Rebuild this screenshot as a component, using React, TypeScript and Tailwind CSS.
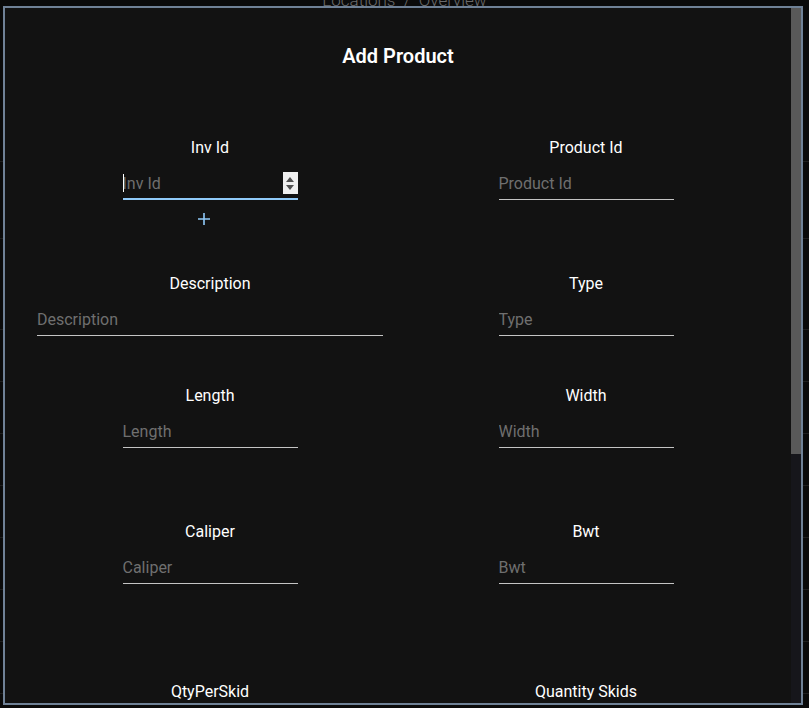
import React from 'react';

type FieldProps = {
  label: string;
  placeholder: string;
  wide?: boolean;
  focused?: boolean;
  withAdd?: boolean;
};

const Field: React.FC<FieldProps> = ({ label, placeholder, wide, focused, withAdd }) => {
  return (
    <div className="flex flex-col items-center">
      <label className="mt-px mb-[11px] text-[16px] leading-[24px] font-normal text-white">{label}</label>
      {focused ? (
        <div className="relative w-[175px] h-[29px] flex items-start border-b-2 border-[#90caf9]">
          <input
            type="text"
            placeholder={placeholder}
            className="flex-1 min-w-0 mt-px h-[24px] bg-transparent outline-none text-[16px] leading-[24px] text-white placeholder:text-[#6f6f6f]"
          />
          {/* caret */}
          <span className="absolute left-0 top-[3px] w-px h-[18px] bg-white" />
          {/* number spinner */}
          <div className="mt-px w-[15px] h-[22px] bg-[#efefef] flex flex-col items-center justify-center gap-[3px]">
            <svg width="8" height="5" viewBox="0 0 8 5">
              <path d="M0 5 L4 0 L8 5 Z" fill="#505050" />
            </svg>
            <svg width="8" height="5" viewBox="0 0 8 5">
              <path d="M0 0 L4 5 L8 0 Z" fill="#505050" />
            </svg>
          </div>
        </div>
      ) : (
        <input
          type="text"
          placeholder={placeholder}
          className={`${wide ? 'w-[346px]' : 'w-[175px]'} h-[29px] pb-[4px] bg-transparent outline-none border-b border-[#c4c4c4] text-[16px] leading-[24px] text-white placeholder:text-[#6f6f6f]`}
        />
      )}
      {withAdd && (
        <div className="w-[175px] mt-[12px] h-[14px]">
          <svg className="ml-[74px]" width="14" height="14" viewBox="0 0 14 14">
            <path d="M7 1 V13 M1 7 H13" stroke="#90caf9" strokeWidth="1.6" />
          </svg>
        </div>
      )}
    </div>
  );
};

const BackgroundPage: React.FC = () => {
  const rows = [278, 330, 382, 434, 486, 538, 590, 642];
  return (
    <div className="min-h-[708px] bg-[#0a0a0a] overflow-hidden">
      <div className="-mt-[11px] text-center text-[17px] leading-[22px] font-light text-[#6a6a6a]">
        Locations&nbsp;&nbsp;/&nbsp;&nbsp;Overview
      </div>
      <div className="mt-[150px] border-b border-[#1f1f1f]" />
      <div className="mt-[76px] border-b border-[#1f1f1f]" />
      <div className="mt-[39px]">
        {rows.map((y) => (
          <div key={y} className="h-[52px] border-b border-[#1f1f1f]" />
        ))}
      </div>
      <div className="mt-[24px] h-[18px] bg-[#262626]" />
    </div>
  );
};

const App: React.FC = () => {
  return (
    <div className="relative w-[809px] h-[708px] overflow-hidden" style={{ fontFamily: 'Roboto, "Noto Sans", sans-serif' }}>
      <BackgroundPage />

      {/* Modal */}
      <div className="fixed left-[3px] top-[6px] w-[800px] h-[699px] border-2 border-[#6f8196] bg-[#121212] flex">
        <div className="flex-1 overflow-hidden px-[17px]">
          <h2 className="pt-[34px] text-center text-[20px] leading-[28px] font-semibold text-white">Add Product</h2>

          <div className="mt-[65px] grid grid-cols-2 items-start">
            <Field label="Inv Id" placeholder="Inv Id" focused withAdd />
            <Field label="Product Id" placeholder="Product Id" />
          </div>

          <div className="mt-[45px] grid grid-cols-2 items-start">
            <Field label="Description" placeholder="Description" wide />
            <Field label="Type" placeholder="Type" />
          </div>

          <div className="mt-[47px] grid grid-cols-2 items-start">
            <Field label="Length" placeholder="Length" />
            <Field label="Width" placeholder="Width" />
          </div>

          <div className="mt-[71px] grid grid-cols-2 items-start">
            <Field label="Caliper" placeholder="Caliper" />
            <Field label="Bwt" placeholder="Bwt" />
          </div>

          <div className="mt-[95px] grid grid-cols-2 items-start">
            <Field label="QtyPerSkid" placeholder="QtyPerSkid" />
            <Field label="Quantity Skids" placeholder="Quantity Skids" />
          </div>
        </div>

        {/* scrollbar */}
        <div className="w-[10px] bg-[#16161b] flex flex-col">
          <div className="h-[446px] bg-[#595959]" />
        </div>
      </div>
    </div>
  );
};

export default App;
